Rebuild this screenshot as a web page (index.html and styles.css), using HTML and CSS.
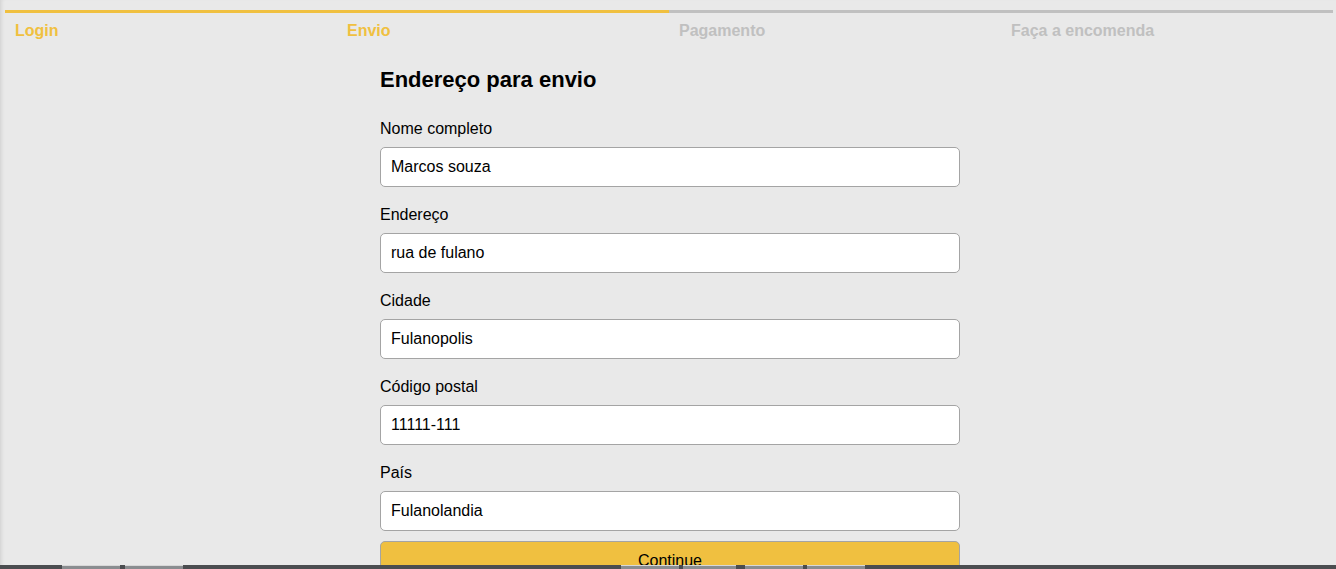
FILE: index.html
```html
<!DOCTYPE html>
<html lang="pt-BR">
<head>
<meta charset="utf-8">
<title>Envio</title>
<link rel="stylesheet" href="styles.css">
</head>
<body>
<div class="page">
  <nav class="steps">
    <div class="step active">Login</div>
    <div class="step active">Envio</div>
    <div class="step">Pagamento</div>
    <div class="step">Faça a encomenda</div>
  </nav>
  <form class="form">
    <h1 class="title">Endereço para envio</h1>
    <div class="field">
      <label class="label" for="nome">Nome completo</label>
      <input class="input" id="nome" type="text" value="Marcos souza">
    </div>
    <div class="field">
      <label class="label" for="end">Endereço</label>
      <input class="input" id="end" type="text" value="rua de fulano">
    </div>
    <div class="field">
      <label class="label" for="cid">Cidade</label>
      <input class="input" id="cid" type="text" value="Fulanopolis">
    </div>
    <div class="field">
      <label class="label" for="cep">Código postal</label>
      <input class="input" id="cep" type="text" value="11111-111">
    </div>
    <div class="field last">
      <label class="label" for="pais">País</label>
      <input class="input" id="pais" type="text" value="Fulanolandia">
    </div>
    <button class="button" type="button">Continue</button>
  </form>
</div>
<div class="taskbar">
  <span class="tb-item" style="left:62px;width:58px"></span>
  <span class="tb-item" style="left:125px;width:58px"></span>
  <span class="tb-item" style="left:621px;width:58px"></span>
  <span class="tb-item" style="left:683px;width:53px"></span>
  <span class="tb-item" style="left:745px;width:58px"></span>
  <span class="tb-item" style="left:807px;width:58px"></span>
</div>
</body>
</html>
```
FILE: styles.css
```css
* { box-sizing: border-box; }
html, body {
  margin: 0;
  padding: 0;
  height: 100%;
  overflow: hidden;
}
body {
  background: #e9e9e9;
  font-family: "Liberation Sans", Arial, sans-serif;
  color: #000;
  box-shadow: inset 4px 0 4px -3px rgba(0,0,0,0.12);
}
.page {
  padding: 10px 3px 0 5px;
}
.steps {
  display: flex;
}
.step {
  flex: 1;
  border-top: 3px solid #c0c0c0;
  color: #c0c0c0;
  font-weight: bold;
  font-size: 16px;
  line-height: 18px;
  padding: 9px 0 0 10px;
}
.step.active {
  border-top-color: #f0c040;
  color: #f0c040;
}
.form {
  width: 580px;
  margin: 28px auto 0;
  display: flex;
  flex-direction: column;
  position: relative;
  left: 1px;
}
.title {
  margin: 0 0 27px;
  font-size: 22px;
  line-height: 24px;
  font-weight: bold;
}
.field {
  display: flex;
  flex-direction: column;
  margin-bottom: 18px;
}
.field.last { margin-bottom: 10px; }
.label {
  font-size: 16px;
  line-height: 18px;
  margin: 1px 0 9px;
}
.input {
  height: 40px;
  border: 1px solid #a4a4a4;
  border-radius: 5px;
  background: #fff;
  padding: 0 10px;
  font-family: "Liberation Sans", Arial, sans-serif;
  font-size: 16px;
  color: #000;
}
.button {
  height: 40px;
  border: 1px solid #a4a4a4;
  border-radius: 5px;
  background: #f0c040;
  font-family: "Liberation Sans", Arial, sans-serif;
  font-size: 16px;
  color: #000;
  padding: 0;
}
.taskbar {
  position: fixed;
  left: 0;
  right: 0;
  bottom: 0;
  height: 4px;
  background: #4b4d50;
}
.tb-item {
  position: absolute;
  top: 0;
  height: 4px;
  background: #8a8d90;
  border-top: 1px solid #d8d8d8;
}
```
